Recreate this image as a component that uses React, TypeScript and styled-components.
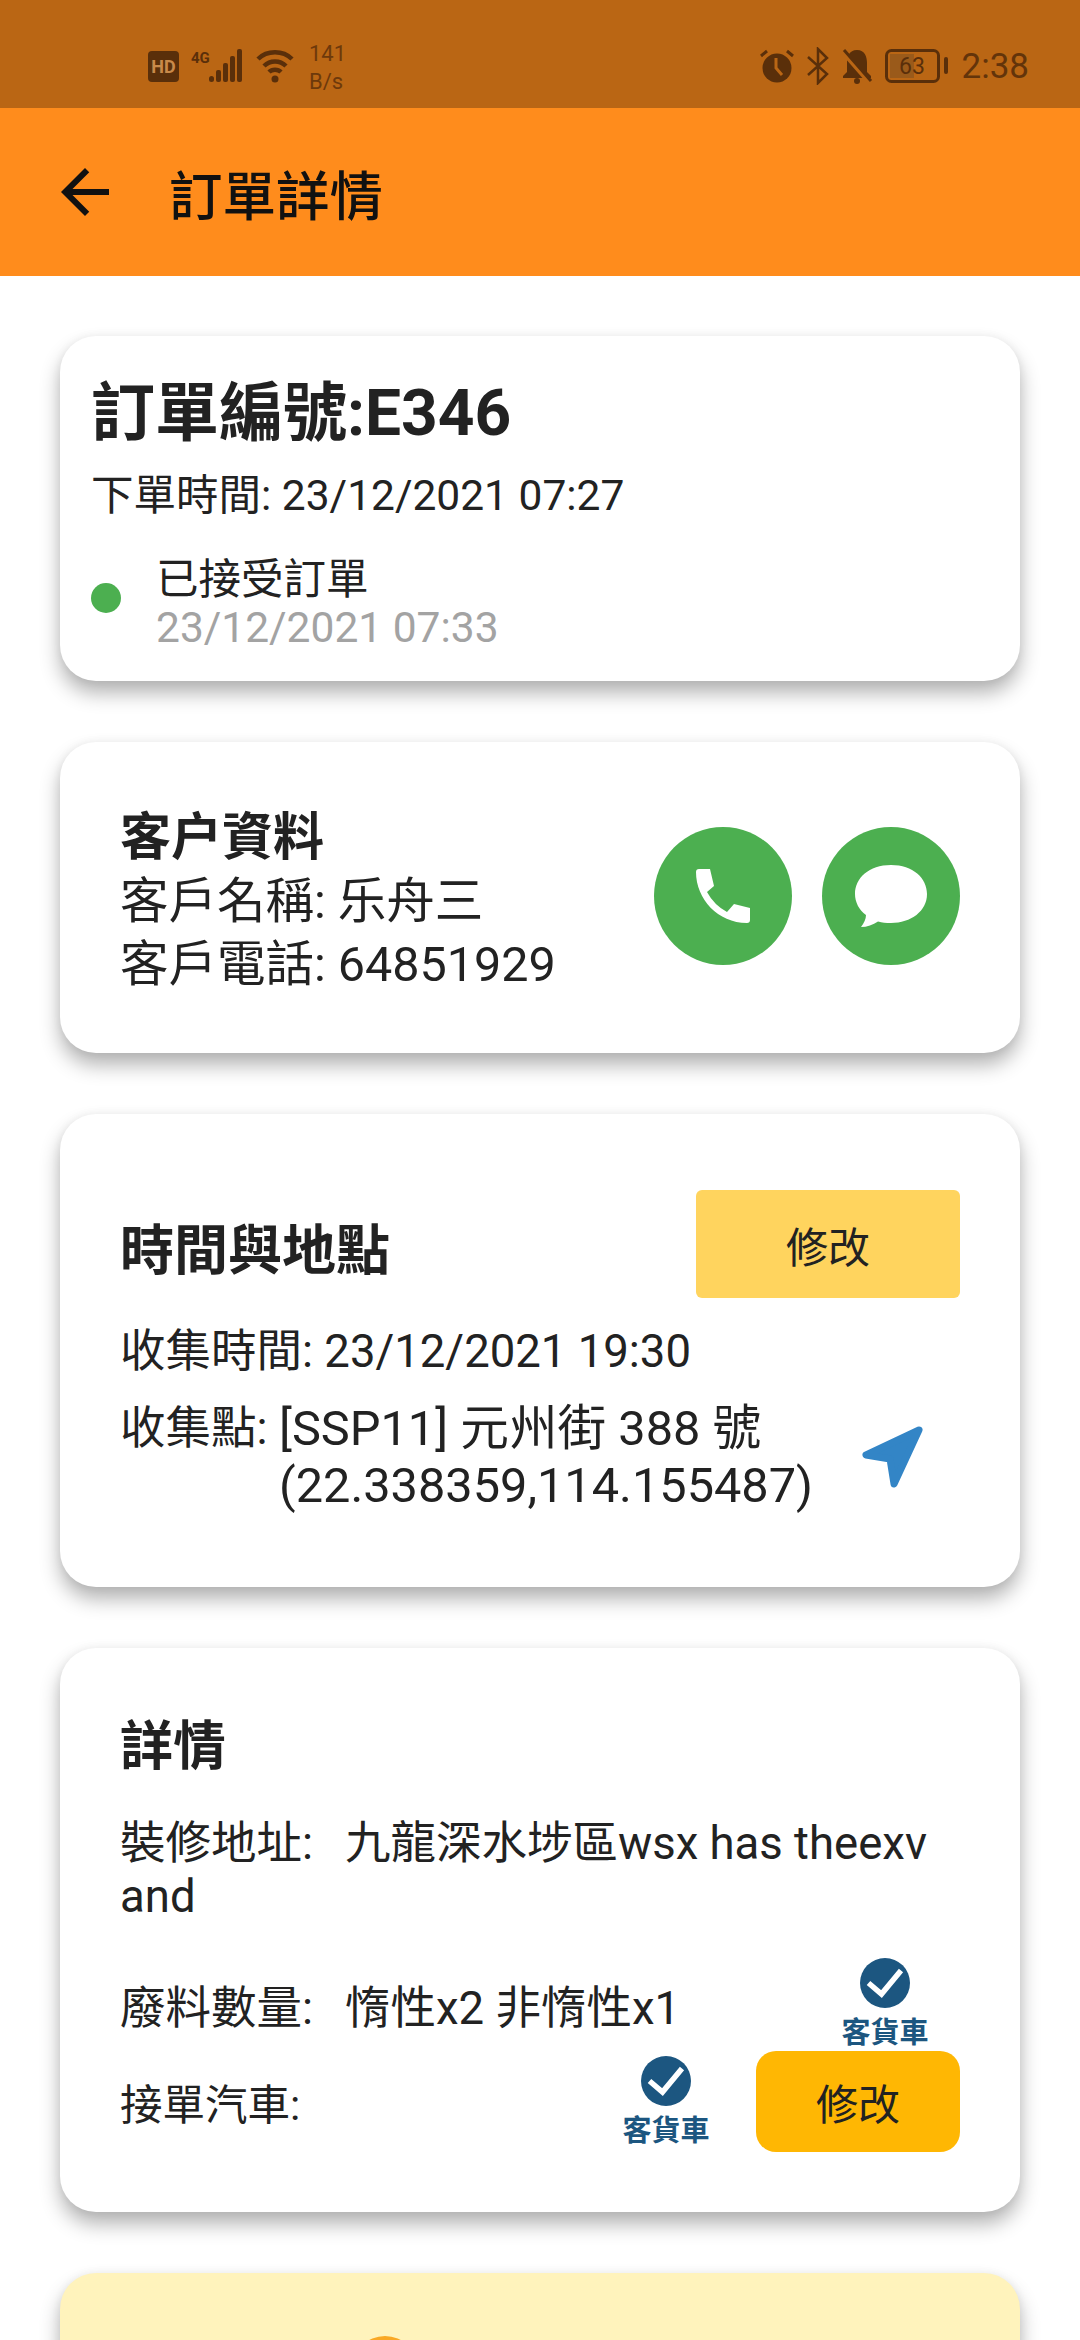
import styled, { createGlobalStyle } from "styled-components";
import { MdArrowBack } from "react-icons/md";

const GlobalStyle = createGlobalStyle`
  html, body {
    margin: 0;
    padding: 0;
    background: #fff;
  }
  body {
    font-family: Roboto, "Noto Sans CJK TC", sans-serif;
    color: #222;
  }
`;

const Screen = styled.div`
  width: 1080px;
  height: 2340px;
  overflow: hidden;
  display: flex;
  flex-direction: column;
`;

const StatusBar = styled.div`
  height: 108px;
  flex: none;
  box-sizing: border-box;
  padding: 24px 51px 0 148px;
  background: #ba6614;
  color: #5a2f0a;
  display: flex;
  justify-content: space-between;
  align-items: center;
`;

const StatusGroup = styled.div`
  display: flex;
  align-items: center;
  gap: 12px;
`;

const NetSpeed = styled.div`
  font-size: 22px;
  line-height: 28px;
  margin: 3px 0 0 3px;
  opacity: 0.8;
`;

const Clock = styled.span`
  font-size: 35px;
  line-height: 40px;
  margin: 2px 0 0 2px;
  opacity: 0.9;
`;

const AppBar = styled.header`
  height: 168px;
  flex: none;
  box-sizing: border-box;
  padding-left: 49px;
  background: #ff8c1c;
  color: #111;
  display: flex;
  align-items: center;
  gap: 48px;
`;

const AppTitle = styled.h1`
  margin: 0;
  font-size: 53.5px;
  font-weight: 500;
`;

const Content = styled.main`
  padding: 60px 60px 0;
  display: flex;
  flex-direction: column;
  gap: 61px;
`;

const Card = styled.section<{ $pad: string }>`
  box-sizing: border-box;
  padding: ${(p) => p.$pad};
  border-radius: 36px;
  background: #fff;
  box-shadow: 0 12px 20px rgba(0, 0, 0, 0.3), 0 0 10px rgba(0, 0, 0, 0.05);
`;

const NoticeCard = styled(Card)`
  background: #fff3bc;
`;

const OrderNumber = styled.h2`
  margin: 0;
  font-size: 64px;
  line-height: 80px;
  font-weight: 700;
`;

const PlacedAt = styled.div`
  margin-top: 15px;
  font-size: 42.5px;
  line-height: 54px;
`;

const StatusRow = styled.div`
  margin-top: 33px;
  display: flex;
  align-items: center;
  gap: 35px;
`;

const Dot = styled.span`
  width: 30px;
  height: 30px;
  margin-bottom: 12px;
  border-radius: 50%;
  background: #4caf50;
`;

const StatusText = styled.div`
  font-size: 42.5px;
  line-height: 48px;
`;

const StatusTime = styled(StatusText)`
  color: #a3a3a3;
`;

const ContactRow = styled.div`
  display: flex;
  justify-content: space-between;
  align-items: center;
`;

const SectionTitle = styled.h3<{ $size: number; $drop?: number }>`
  margin: 0;
  padding-top: ${(p) => p.$drop ?? 0}px;
  font-size: ${(p) => p.$size}px;
  line-height: 64px;
  font-weight: 700;
`;

const ContactLine = styled.div`
  font-size: 48.5px;
  line-height: 63px;
`;

const RoundButtons = styled.div`
  display: flex;
  gap: 30px;
  margin-bottom: 10px;
`;

const RoundButton = styled.button`
  width: 138px;
  height: 138px;
  padding: 0;
  border: 0;
  border-radius: 50%;
  background: #4caf50;
  display: flex;
  align-items: center;
  justify-content: center;
`;

const TitleRow = styled.div`
  display: flex;
  justify-content: space-between;
  align-items: center;
`;

const EditButton = styled.button<{ $tone: string; $w: number; $h: number; $r: number }>`
  width: ${(p) => p.$w}px;
  height: ${(p) => p.$h}px;
  border: 0;
  border-radius: ${(p) => p.$r}px;
  background: ${(p) => p.$tone};
  color: #222;
  font-family: inherit;
  font-size: 42px;
`;

const PickupTime = styled.div`
  margin-top: 26px;
  font-size: 45.5px;
  line-height: 56px;
`;

const PlaceRow = styled.div`
  margin-top: 20px;
  display: flex;
  align-items: center;
  justify-content: space-between;
  padding-right: 35px;
`;

const PlaceText = styled.div`
  display: grid;
  grid-template-columns: 159px auto;
  line-height: 57px;
`;

const PlaceLabel = styled.span`
  font-size: 45.5px;
`;

const PlaceValue = styled.span`
  font-size: 48.7px;
  white-space: nowrap;
`;

const InfoLabel = styled.span`
  display: inline-block;
  width: 225px;
`;

const InfoLine = styled.div`
  margin-top: 38px;
  font-size: 45.5px;
  line-height: 53px;
`;

const InfoRow = styled.div`
  margin-top: 35px;
  padding-right: 30px;
  display: flex;
  align-items: center;
  justify-content: space-between;
  font-size: 45.5px;
`;

const CarRow = styled.div`
  margin-top: 1px;
  display: flex;
  align-items: center;
  justify-content: space-between;
  font-size: 42.5px;
`;

const Car = styled.div`
  width: 90px;
  display: flex;
  flex-direction: column;
  align-items: center;
  gap: 9px;
`;

const CarLabel = styled.span`
  font-size: 29px;
  line-height: 33px;
  font-weight: 700;
  color: #1c5680;
  white-space: nowrap;
`;

const CarActions = styled.div`
  display: flex;
  align-items: center;
  gap: 45px;
`;

const PendingBadge = styled.div`
  width: 66px;
  height: 66px;
  border-radius: 50%;
  background: #f9a825;
`;

const CarMark = () => (
  <Car>
    <svg width="50" height="50" viewBox="0 0 50 50">
      <circle cx="25" cy="25" r="25" fill="#1c5680" />
      <path d="M8.5 25L21.5 36L41 12.5" fill="none" stroke="#fff" strokeWidth="5.5" />
    </svg>
    <CarLabel>客貨車</CarLabel>
  </Car>
);

const App = () => {
  return (
    <Screen>
      <GlobalStyle />
      <StatusBar>
        <StatusGroup>
          <svg width="31" height="31" viewBox="0 0 31 31">
            <rect width="31" height="31" rx="4" fill="#5a2f0a" />
            <text x="15.5" y="22" fontSize="18" fontWeight="700" textAnchor="middle" fill="#c98a4a" fontFamily="Roboto">HD</text>
          </svg>
          <svg width="53" height="34" viewBox="0 0 53 34" fill="#5a2f0a">
            <text x="0" y="14" fontSize="15" fontWeight="700" fontFamily="Roboto">4G</text>
            <rect x="18" y="27" width="5" height="6" rx="2.5" />
            <rect x="25" y="21" width="5" height="12" rx="2" />
            <rect x="32" y="14" width="5" height="19" rx="2" />
            <rect x="39" y="7" width="5" height="26" rx="2" />
            <rect x="46" y="0" width="5" height="33" rx="2" />
          </svg>
          <svg width="38" height="34" viewBox="0 0 38 34" fill="none" stroke="#5a2f0a" strokeWidth="4.5">
            <path d="M2 10C11 1 27 1 36 10" />
            <path d="M8 17C14 11 24 11 30 17" />
            <path d="M13 23C16 20 22 20 25 23" />
            <circle cx="19" cy="30" r="3.5" fill="#5a2f0a" stroke="none" />
          </svg>
          <NetSpeed>
            141
            <br />
            B/s
          </NetSpeed>
        </StatusGroup>
        <StatusGroup>
          <svg width="36" height="36" viewBox="0 0 36 36">
            <circle cx="18" cy="20" r="14.5" fill="#5a2f0a" />
            <path d="M17 10V20L23 27" fill="none" stroke="#ba6614" strokeWidth="3" />
            <path d="M2 8L8 3M34 8L28 3" stroke="#5a2f0a" strokeWidth="3" />
          </svg>
          <svg width="22" height="38" viewBox="0 0 22 38" fill="none" stroke="#5a2f0a" strokeWidth="2.5">
            <path d="M1 10L20 27L11 36V2L20 11L1 28" />
          </svg>
          <svg width="32" height="36" viewBox="0 0 32 36">
            <path d="M16 2C8 2 6 9 6 15V24L2 28V30H30V28L26 24V15C26 9 24 2 16 2Z" fill="#5a2f0a" />
            <circle cx="16" cy="33" r="3" fill="#5a2f0a" />
            <path d="M3 5L30 36" stroke="#ba6614" strokeWidth="5" />
            <path d="M3 2L30 33" stroke="#5a2f0a" strokeWidth="3" />
          </svg>
          <svg width="63" height="34" viewBox="0 0 63 34">
            <rect x="1.5" y="1.5" width="52" height="31" rx="5" fill="none" stroke="#5a2f0a" strokeWidth="3" />
            <rect x="5" y="5" width="24" height="24" fill="#9a5a1a" />
            <text x="27" y="25" fontSize="23" textAnchor="middle" fill="#5a2f0a" fontFamily="Roboto">63</text>
            <rect x="59" y="8" width="4" height="17" rx="2" fill="#5a2f0a" />
          </svg>
          <Clock>2:38</Clock>
        </StatusGroup>
      </StatusBar>
      <AppBar>
        <MdArrowBack size={72} />
        <AppTitle>訂單詳情</AppTitle>
      </AppBar>
      <Content>
        <Card $pad="38px 31px 29px">
          <OrderNumber>訂單編號:E346</OrderNumber>
          <PlacedAt>下單時間: 23/12/2021 07:27</PlacedAt>
          <StatusRow>
            <Dot />
            <div>
              <StatusText>已接受訂單</StatusText>
              <StatusTime>23/12/2021 07:33</StatusTime>
            </div>
          </StatusRow>
        </Card>
        <Card $pad="64px 60px 57px">
          <ContactRow>
            <div>
              <SectionTitle $size={51}>客户資料</SectionTitle>
              <ContactLine>客戶名稱: 乐舟三</ContactLine>
              <ContactLine>客戶電話: 64851929</ContactLine>
            </div>
            <RoundButtons>
              <RoundButton>
                <svg width="54" height="54" viewBox="0 0 54 54" fill="#fff">
                  <path d="M3 0H14L18 17L11 23Q18 36 31 43L38 35L54 39V51Q54 54 51 54C22 54 0 30 0 3Q0 0 3 0Z" />
                </svg>
              </RoundButton>
              <RoundButton>
                <svg width="72" height="62" viewBox="0 0 72 62" fill="#fff">
                  <path d="M36 0C58 0 72 13 72 29C72 46 56 58 36 58C31 58 27 57.5 23 56.5C18 60 12 62 6 62C9 58 11 54 11 50C4 45 0 37 0 29C0 13 14 0 36 0Z" />
                </svg>
              </RoundButton>
            </RoundButtons>
          </ContactRow>
        </Card>
        <Card $pad="76px 60px 73px">
          <TitleRow>
            <SectionTitle $size={54} $drop={16}>時間與地點</SectionTitle>
            <EditButton $tone="#ffd45e" $w={264} $h={108} $r={6}>
              修改
            </EditButton>
          </TitleRow>
          <PickupTime>收集時間: 23/12/2021 19:30</PickupTime>
          <PlaceRow>
            <PlaceText>
              <PlaceLabel>收集點:</PlaceLabel>
              <PlaceValue>
                [SSP11] 元州街 388 號
                <br />
                (22.338359,114.155487)
              </PlaceValue>
            </PlaceText>
            <svg width="64" height="64" viewBox="0 0 64 64" fill="#3385c6" stroke="#3385c6" strokeWidth="7" strokeLinejoin="round">
              <path d="M58 5L5 30L29 34L33 59Z" />
            </svg>
          </PlaceRow>
        </Card>
        <Card $pad="67px 60px 60px">
          <SectionTitle $size={53}>詳情</SectionTitle>
          <InfoLine>
            <InfoLabel>裝修地址:</InfoLabel>
            <span>九龍深水埗區wsx has theexv</span> <span>and</span>
          </InfoLine>
          <InfoRow>
            <span>
              <InfoLabel>廢料數量:</InfoLabel>惰性x2 非惰性x1
            </span>
            <CarMark />
          </InfoRow>
          <CarRow>
            <span>接單汽車:</span>
            <CarActions>
              <CarMark />
              <EditButton $tone="#ffb703" $w={204} $h={101} $r={20}>
                修改
              </EditButton>
            </CarActions>
          </CarRow>
        </Card>
        <NoticeCard $pad="63px 0 200px 292px">
          <PendingBadge />
        </NoticeCard>
      </Content>
    </Screen>
  );
};

export default App;
